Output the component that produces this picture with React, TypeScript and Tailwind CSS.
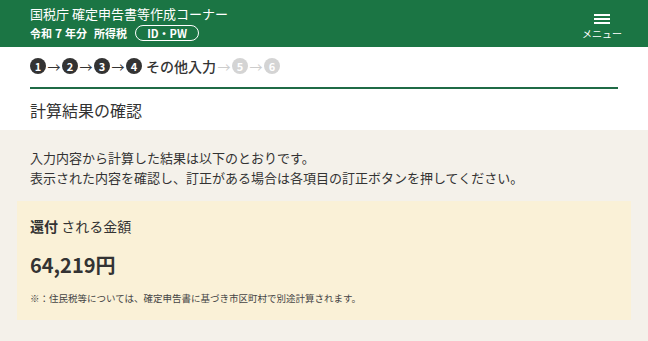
const font = { fontFamily: '"Noto Sans CJK JP", "Noto Sans", sans-serif' };

function Step({ n, active }: { n: number; active: boolean }) {
  return (
    <span
      className={
        "inline-flex h-[16px] w-[16px] items-center justify-center rounded-full text-[11px] font-bold leading-none text-white " +
        (active ? "bg-[#333333]" : "bg-[#d4d4d4]")
      }
    >
      {n}
    </span>
  );
}

function Arrow({ active }: { active: boolean }) {
  return (
    <span className={"mx-[1px] w-[14px] text-center text-[13px] leading-none " + (active ? "text-[#333333]" : "text-[#cccccc]")}>
      →
    </span>
  );
}

export default function App() {
  return (
    <div className="h-[341px] w-[648px] overflow-hidden bg-[#f4f1ea] text-[#333333]" style={font}>
      <header className="flex h-[47px] items-start justify-between bg-[#1b7544] pl-[30px] pr-[26px] text-white">
        <div className="pt-[5px]">
          <div className="text-[13px] leading-[18px]">国税庁 確定申告書等作成コーナー</div>
          <div className="mt-[2px] flex items-center text-[11px] font-bold leading-[16px]">
            <span>令和</span>
            <span className="mx-[3px] text-[12px]">7</span>
            <span>年分</span>
            <span className="ml-[7px]">所得税</span>
            <span className="ml-[8px] inline-flex h-[16px] w-[64px] items-center justify-center rounded-full border border-white text-[11px] font-bold">
              ID・PW
            </span>
          </div>
        </div>
        <div className="flex flex-col items-center pt-[14px]">
          <div className="flex w-[16px] flex-col gap-[2px]">
            <span className="h-[2px] bg-white" />
            <span className="h-[2px] bg-white" />
            <span className="h-[2px] bg-white" />
          </div>
          <div className="mt-[3px] text-[10px] leading-[14px]">メニュー</div>
        </div>
      </header>

      <div className="bg-white">
        <div className="mx-[30px] flex h-[42px] items-center border-b-2 border-[#1f6b46] pb-[2px]">
          <Step n={1} active />
          <Arrow active />
          <Step n={2} active />
          <Arrow active />
          <Step n={3} active />
          <Arrow active />
          <Step n={4} active />
          <span className="ml-[4px] text-[14px] font-medium leading-none">その他入力</span>
          <Arrow active={false} />
          <Step n={5} active={false} />
          <Arrow active={false} />
          <Step n={6} active={false} />
        </div>
        <div className="flex h-[41px] items-center px-[30px] text-[16px] leading-none">計算結果の確認</div>
      </div>

      <div className="px-[30px] pt-[18px] text-[13px] leading-[20px]">
        <p>入力内容から計算した結果は以下のとおりです。</p>
        <p>表示された内容を確認し、訂正がある場合は各項目の訂正ボタンを押してください。</p>
      </div>

      <div className="mx-[17px] mt-[13px] h-[119px] bg-[#faf1d7] px-[13px] pt-[15px]">
        <div className="text-[14px] leading-[20px]">
          <span className="font-bold">還付</span> される金額
        </div>
        <div className="mt-[16px] text-[20px] font-bold leading-[26px]">64,219円</div>
        <div className="mt-[13px] text-[9.5px] leading-[14px] text-[#444444]">
          ※：住民税等については、確定申告書に基づき市区町村で別途計算されます。
        </div>
      </div>
    </div>
  );
}
